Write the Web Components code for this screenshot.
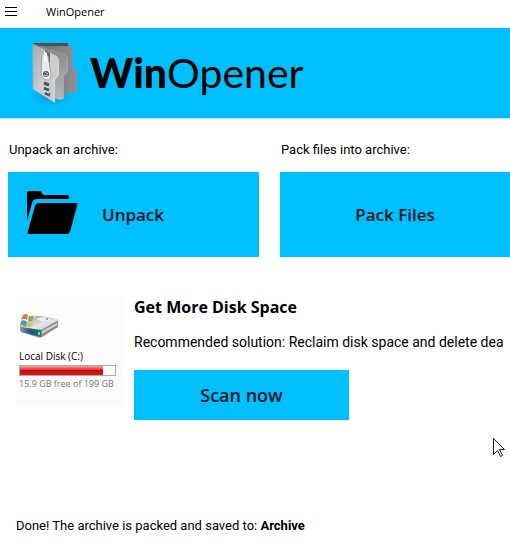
<!DOCTYPE html>
<html lang="en">
<head>
<meta charset="UTF-8">
<meta name="viewport" content="width=device-width, initial-scale=1">
<title>WinOpener</title>
<style>
  :root {
    --accent: #00bfff;
    --ink: #000;
    --heading-font: "Open Sans", "Noto Sans", sans-serif;
  }

  body {
    margin: 0;
    background: #fff;
    color: var(--ink);
    font: 13px/20px Roboto, sans-serif;
  }
</style>
</head>
<body>
<opener-app></opener-app>

<script>
class TitleBar extends HTMLElement {
  constructor() {
    super();
    this.attachShadow({ mode: 'open' });
  }

  connectedCallback() {
    this.shadowRoot.innerHTML = `
      <style>
        :host {
          display: flex;
          align-items: center;
          gap: 28px;
          height: 24px;
          padding: 0 4px 4px;
          font-family: var(--heading-font);
          font-size: 11px;
        }

        button {
          display: flex;
          padding: 0;
          border: none;
          background: none;
          color: inherit;
        }
      </style>
      <button type="button" aria-label="Menu">
        <svg width="14" height="12" viewBox="0 0 14 12" stroke="currentColor" shape-rendering="crispEdges">
          <path d="M1 1.5H13M1 5.5H13M1 9.500H13"/>
        </svg>
      </button>
      <span><slot></slot></span>
    `;
  }
}

class BrandBanner extends HTMLElement {
  constructor() {
    super();
    this.attachShadow({ mode: 'open' });
  }

  connectedCallback() {
    this.shadowRoot.innerHTML = `
      <style>
        :host {
          display: flex;
          align-items: center;
          gap: 8px;
          height: 91px;
          padding-left: 28px;
          box-sizing: border-box;
          background: var(--accent);
          border-bottom: 1px solid #b4e6f8;
        }

        h1 {
          margin: 0;
          font: 400 41px/52px Lato, sans-serif;
        }

        b {
          font-weight: 900;
        }
      </style>
      <svg width="54" height="72" viewBox="0 0 54 72" aria-hidden="true">
        <defs>
          <linearGradient id="front" x1="0" y1="0" x2="1" y2="1">
            <stop offset="0" stop-color="#a4a7a8"/>
            <stop offset=".5" stop-color="#cdcecf"/>
            <stop offset="1" stop-color="#c3c4c5"/>
          </linearGradient>
          <linearGradient id="middle" x1="0" y1="0" x2="0" y2="1">
            <stop offset="0" stop-color="#86898b"/>
            <stop offset="1" stop-color="#b5b7b8"/>
          </linearGradient>
          <linearGradient id="back" x1="0" y1="0" x2="1" y2="0">
            <stop offset="0" stop-color="#626669"/>
            <stop offset="1" stop-color="#8f9193"/>
          </linearGradient>
          <radialGradient id="shade">
            <stop offset="0" stop-color="#0878a8" stop-opacity=".5"/>
            <stop offset="1" stop-color="#0878a8" stop-opacity="0"/>
          </radialGradient>
        </defs>
        <ellipse cx="23" cy="60" rx="23" ry="9" fill="url(#shade)"/>
        <path d="M5 6H40L41 9 45 11V30L49 35V55L37 57 6 51Z" fill="url(#back)"/>
        <path d="M5 6H40V9L10 9Z" fill="#4c4f51"/>
        <path d="M8 8 35 15Q39 16 40 20V34L36 39V62L31 63 8 52Z" fill="url(#middle)"/>
        <path d="M39 20V34L35 39V62" fill="none" stroke="#a9abac"/>
        <path d="M5 7 25 17Q30 19 31 23V38L27 43V66L5 52Z" fill="url(#front)"/>
        <path d="M30 23V38L26 43V65" fill="none" stroke="#dcdddd"/>
        <path d="M5 7V52" fill="none" stroke="#a6a9aa"/>
        <path d="m17 13 5 3v10l-5-2Z" fill="#666"/>
        <path d="M14 18q3-3 6 1l3 18q0 7-5 6-4-1-5-7Z" fill="#e9eaea" stroke="#9c9e9f"/>
        <path d="m16 14 3 2v9l-3-1Z" fill="#f8f8f8"/>
        <ellipse cx="18" cy="37" rx="3" ry="3" fill="#555"/>
        <path d="m17 35 3 2M16 38l4 1" stroke="#ddd"/>
        <path d="m16 46 5 2M16 51l5 2M17 56l5 2" stroke="#515557" stroke-width="3"/>
        <path d="m16 49 5 2M16 54l5 2" stroke="#e4e4e4"/>
      </svg>
      <h1><b>Win</b>Opener</h1>
    `;
  }
}

class TileButton extends HTMLElement {
  constructor() {
    super();
    this.attachShadow({ mode: 'open' });
  }

  connectedCallback() {
    this.shadowRoot.innerHTML = `
      <style>
        :host {
          display: block;
          height: 85px;
          font-size: 17px;
        }

        button {
          display: flex;
          align-items: center;
          justify-content: center;
          gap: 23px;
          width: 100%;
          height: 100%;
          padding: 0 16px;
          border: none;
          background: var(--accent);
          color: #04141c;
          font-family: var(--heading-font);
          font-size: inherit;
          font-weight: 600;
          line-height: 24px;
          cursor: pointer;
        }

        :host([align="start"]) button {
          justify-content: flex-start;
        }

        button:hover {
          filter: brightness(0.95);
        }
      </style>
      <button type="button"><slot name="icon"></slot><span><slot></slot></span></button>
    `;
  }
}

class FolderIcon extends HTMLElement {
  constructor() {
    super();
    this.attachShadow({ mode: 'open' });
  }

  connectedCallback() {
    this.shadowRoot.innerHTML = `
      <style>
        :host {
          display: block;
        }

        svg {
          display: block;
        }
      </style>
      <svg width="55" height="50" viewBox="0 0 55 50" fill="#000" aria-hidden="true">
        <path d="M3 31V3Q3 1 5 1H16Q17 1 18 3L19 5H43Q45 5 45 7V9H13Q9 9 8 13Z"/>
        <path d="M14 13H52Q54 13 53 16L46 42Q45 44 43 44H5Q3 44 4 41L11 16Q12 13 14 13Z"/>
      </svg>
    `;
  }
}

class DiskCard extends HTMLElement {
  constructor() {
    super();
    this.attachShadow({ mode: 'open' });
  }

  connectedCallback() {
    const used = this.getAttribute('used');
    const total = this.getAttribute('total');

    this.shadowRoot.innerHTML = `
      <style>
        :host {
          display: block;
          box-sizing: border-box;
          width: 106px;
          height: 108px;
          padding: 16px 4px 0 3px;
          background: #fbfbfb;
          font-family: var(--heading-font);
          font-size: 9px;
          line-height: 13px;
          white-space: nowrap;
        }

        svg, label, progress {
          display: block;
        }

        svg {
          margin-bottom: 7px;
        }

        label {
          font-size: 10px;
        }

        progress {
          appearance: none;
          box-sizing: border-box;
          width: 97px;
          height: 11px;
          margin: 2px 0 1px;
          border: 1px solid #a9a9a9;
          background: #fff;
        }

        progress::-webkit-progress-bar {
          background: #fff;
        }

        progress::-webkit-progress-value {
          background: linear-gradient(#f5a5a5, #e23a3a 40%, #cb0909 50%, #d91a1a);
        }

        .free {
          color: #777;
        }
      </style>
      <svg width="42" height="30" viewBox="0 0 42 30" aria-hidden="true">
        <defs>
          <linearGradient id="top" x1="0" y1="0" x2="1" y2="1">
            <stop offset="0" stop-color="#999"/>
            <stop offset=".6" stop-color="#e5e5e5"/>
            <stop offset="1" stop-color="#b5b5b5"/>
          </linearGradient>
          <linearGradient id="face" x1="0" y1="0" x2="1" y2="0">
            <stop offset="0" stop-color="#8097a6"/>
            <stop offset=".5" stop-color="#1c5a86"/>
            <stop offset="1" stop-color="#16805a"/>
          </linearGradient>
        </defs>
        <path d="M1 14 15 4Q17 3 20 3L37 6Q39 7 39 9V14L23 24Q21 25 18 24L2 19Z" fill="#8a8a8a"/>
        <path d="M1 14 15 4Q17 3 20 3L37 6Q39 7 38 8L24 16Q22 17 19 17Z" fill="url(#top)"/>
        <path d="m17 6 7-2 8 2-7 3Z" fill="#eee"/>
        <path d="m26 6 3-1v2Z" fill="#888"/>
        <path d="M1 14 22 17V24L3 19Q1 18 1 16Z" fill="url(#face)"/>
        <path d="m23 18 15-8v2l-15 9Z" fill="#d2d2d2"/>
        <path d="M20 19v3" stroke="#65ed9b" stroke-width="2"/>
        <path d="M4 2Q7 0 9 2L8 7Q5 5 2 7Z" fill="#dd7b4c"/>
        <path d="M10 3q3 1 5-1l-2 6q-3 1-4-1Z" fill="#86a94a"/>
        <path d="M2 8q4-2 6 1l-1 5q-3-3-6-1Z" fill="#5990bd"/>
        <path d="M9 9q3 2 5 0l-2 5q-3 1-5-1Z" fill="#e6bd4c"/>
      </svg>
      <label for="usage">Local Disk (C:)</label>
      <progress id="usage" value="${used}" max="${total}"></progress>
      <span class="free"><slot></slot></span>
    `;
  }
}

class PointerArrow extends HTMLElement {
  constructor() {
    super();
    this.attachShadow({ mode: 'open' });
  }

  connectedCallback() {
    this.shadowRoot.innerHTML = `
      <style>
        :host {
          position: absolute;
          top: 437px;
          right: 4px;
          pointer-events: none;
        }

        svg {
          display: block;
        }
      </style>
      <svg width="14" height="21" viewBox="0 0 14 21" fill="#fff" stroke="#161616" aria-hidden="true">
        <path d="M1.500 1.500V17.500L5.500 13.500L8.500 19.500L10.500 18.500L7.500 12.500H12.500Z"/>
      </svg>
    `;
  }
}

class OpenerApp extends HTMLElement {
  constructor() {
    super();
    this.attachShadow({ mode: 'open' });
  }

  connectedCallback() {
    this.shadowRoot.innerHTML = `
      <style>
        :host {
          position: relative;
          display: flex;
          flex-direction: column;
          min-height: 100vh;
          overflow: hidden;
        }

        .actions {
          display: grid;
          grid-template-columns: 12fr 11fr;
          gap: 12px 21px;
          padding: 21px 0 0 8px;
        }

        .actions p {
          padding: 0 1px;
        }

        .offer {
          display: flex;
          gap: 12px;
          padding: 40px 0 0 16px;
        }

        .offer disk-card {
          flex: none;
        }

        .details {
          flex: 1;
          min-width: 0;
        }

        h2, p {
          margin: 0;
        }

        h2 {
          font-family: var(--heading-font);
          font-size: 16px;
          line-height: 20px;
        }

        .details p {
          margin: 15px 0 18px;
          font-size: 14px;
          white-space: nowrap;
        }

        .details tile-button {
          width: 215px;
          max-width: 100%;
          height: 50px;
          font-size: 18px;
        }

        footer {
          margin-top: auto;
          padding: 0 16px 12px;
        }
      </style>
      <title-bar>WinOpener</title-bar>
      <brand-banner></brand-banner>
      <section class="actions">
        <p>Unpack an archive:</p>
        <p>Pack files into archive:</p>
        <tile-button align="start"><folder-icon slot="icon"></folder-icon>Unpack</tile-button>
        <tile-button>Pack Files</tile-button>
      </section>
      <section class="offer">
        <disk-card used="174" total="199">15.9 GB free of 199 GB</disk-card>
        <div class="details">
          <h2>Get More Disk Space</h2>
          <p>Recommended solution: Reclaim disk space and delete dea</p>
          <tile-button>Scan now</tile-button>
        </div>
      </section>
      <footer>Done! The archive is packed and saved to: <b>Archive</b></footer>
      <pointer-arrow></pointer-arrow>
    `;
  }
}

customElements.define('title-bar', TitleBar);
customElements.define('brand-banner', BrandBanner);
customElements.define('tile-button', TileButton);
customElements.define('folder-icon', FolderIcon);
customElements.define('disk-card', DiskCard);
customElements.define('pointer-arrow', PointerArrow);
customElements.define('opener-app', OpenerApp);
</script>
</body>
</html>
